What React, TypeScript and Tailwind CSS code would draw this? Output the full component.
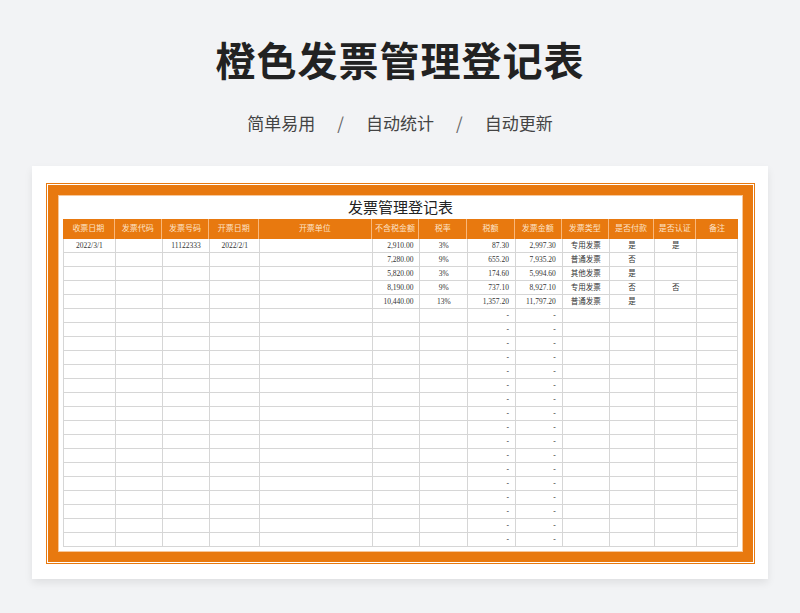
const cols = [52, 47, 48, 50, 113, 48, 48, 48, 47, 47, 46, 42, 42];
const heads = ["收票日期","发票代码","发票号码","开票日期","开票单位","不含税金额","税率","税额","发票金额","发票类型","是否付款","是否认证","备注"];
const data: string[][] = [
  ["2022/3/1","","11122333","2022/2/1","","2,910.00","3%","87.30","2,997.30","专用发票","是","是",""],
  ["","","","","","7,280.00","9%","655.20","7,935.20","普通发票","否","",""],
  ["","","","","","5,820.00","3%","174.60","5,994.60","其他发票","是","",""],
  ["","","","","","8,190.00","9%","737.10","8,927.10","专用发票","否","否",""],
  ["","","","","","10,440.00","13%","1,357.20","11,797.20","普通发票","是","",""],
];
while (data.length < 22) data.push(["","","","","","","","-","-","","","",""]);
const right = new Set([5, 7, 8]);

export default function App() {
  return (
    <div className="w-[800px] h-[613px] bg-[#f2f3f5] flex flex-col items-center" style={{ fontFamily: '"Noto Sans CJK SC", sans-serif' }}>
      <h1 className="mt-[33px] text-[40px] leading-[52px] font-bold text-[#222] tracking-[1px]">橙色发票管理登记表</h1>
      <div className="mt-[26px] flex items-center gap-[22px] text-[17px] leading-[24px] text-[#444]">
        <span>简单易用</span><span className="text-[#666]">/</span><span>自动统计</span><span className="text-[#666]">/</span><span>自动更新</span>
      </div>
      <div className="mt-[31px] w-[736px] h-[413px] bg-white shadow-[0_4px_8px_rgba(0,0,0,0.08)] pt-[17px] pl-[14px]">
        <div className="w-[709px] border border-[#e8790f] p-px bg-white">
          <div className="bg-[#e8790f] p-[10px]">
            <div className="bg-white border border-[#f7c79a] px-[4px] pt-[2px] pb-[4px]" style={{ fontFamily: '"Liberation Serif", "Noto Sans CJK SC", serif' }}>
              <div className="text-center text-[15px] leading-[20px] text-[#222] h-[21px]">发票管理登记表</div>
              <div className="flex bg-[#e8790f] h-[20px] text-[8px] text-[#fde3c8]">
                {heads.map((h, i) => (
                  <div key={i} className="flex items-center justify-center border-r border-[#f9b77a] last:border-r-0" style={{ width: cols[i] }}>{h}</div>
                ))}
              </div>
              {data.map((r, ri) => (
                <div key={ri} className="flex h-[14px] text-[7.5px] text-[#333] border-b border-[#d6d6d6]">
                  {r.map((c, i) => (
                    <div key={i} className={`flex items-center border-l border-[#d6d6d6] ${i === 12 ? "border-r" : ""} ${right.has(i) ? "justify-end pr-[6px]" : "justify-center"}`} style={{ width: cols[i] }}>{c}</div>
                  ))}
                </div>
              ))}
            </div>
          </div>
        </div>
      </div>
    </div>
  );
}
